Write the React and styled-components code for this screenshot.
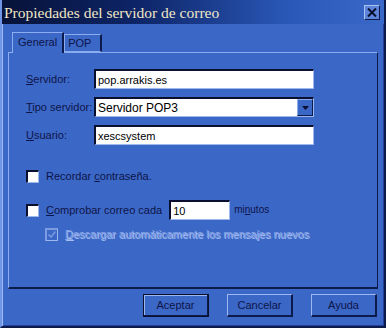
import React from "react";
import styled, { createGlobalStyle } from "styled-components";

const Global = createGlobalStyle`
  html, body { margin: 0; padding: 0; background: #3a66c6; }
  body { font-family: "Liberation Sans", Arial, sans-serif; }
`;

const Window = styled.div`
  box-sizing: border-box;
  width: 386px;
  height: 328px;
  background: #3b67c7;
  display: flex;
  flex-direction: column;
  border-left: 2px solid #6f95e6;
  border-right: 2px solid #0c1a4c;
  border-bottom: 2px solid #0c1a4c;
  box-shadow: inset 1px 0 0 #9cbaf5, inset -1px -1px 0 #22409a;
`;

const TitleBar = styled.div`
  height: 24px;
  display: flex;
  align-items: center;
  justify-content: space-between;
  padding: 0 4px 0 2px;
  background: linear-gradient(90deg, #061238 0%, #0d2466 35%, #2a58b8 75%, #3a68c8 100%);
`;

const Title = styled.span`
  font-family: "Liberation Serif", "Times New Roman", serif;
  font-size: 15.5px;
  color: #f1e6c6;
  margin-top: 1px;
`;

const CloseBtn = styled.div`
  box-sizing: border-box;
  width: 16px;
  height: 15px;
  background: #5d84d8;
  border: 1px solid #0c1a4c;
  border-top-color: #a8c2f4;
  border-left-color: #a8c2f4;
  display: flex;
  align-items: center;
  justify-content: center;
`;

const Body = styled.div`
  flex: 1;
  display: flex;
  flex-direction: column;
  padding: 8px 6px 0 6px;
`;

const Tabs = styled.div`
  display: flex;
  align-items: flex-end;
  padding-left: 4px;
  height: 20px;
  position: relative;
  z-index: 1;
`;

const Tab = styled.div`
  box-sizing: border-box;
  height: ${(p) => (p.$active ? "21px" : "18px")};
  margin-bottom: ${(p) => (p.$active ? "-1px" : "0")};
  padding: ${(p) => (p.$active ? "3px 5px 0 5px" : "2px 9px 0 3px")};
  font-size: 11px;
  color: #0e1548;
  background: #3b67c7;
  border-top: 1px solid #8cacf0;
  border-left: 1px solid #8cacf0;
  border-right: 2px solid #0c1a4c;
  ${(p) => (p.$active ? "" : "border-bottom: 1px solid #8cacf0;")}
`;

const Panel = styled.div`
  box-sizing: border-box;
  width: 370px;
  height: 237px;
  border-top: 1px solid #8cacf0;
  border-left: 1px solid #8cacf0;
  border-right: 1px solid #0c1a4c;
  border-bottom: 2px solid #0c1a4c;
  padding: 16px 0 0 17px;
  display: flex;
  flex-direction: column;
`;

const Form = styled.div`
  display: grid;
  grid-template-columns: 68px 220px;
  row-gap: 8px;
  align-items: center;
`;

const Label = styled.span`
  font-size: 11px;
  color: #0e1548;
`;

const Input = styled.div`
  box-sizing: border-box;
  height: ${(p) => p.$h || 20}px;
  width: ${(p) => (p.$w ? p.$w + "px" : "auto")};
  margin-left: ${(p) => p.$ml || 0}px;
  background: #fff;
  border-top: 2px solid #0a0f30;
  border-left: 2px solid #0a0f30;
  border-right: 1px solid #9db8ee;
  border-bottom: 1px solid #9db8ee;
  font-size: 11px;
  color: #000;
  padding-left: 2px;
  display: flex;
  align-items: center;
`;

const Select = styled(Input)`
  padding-right: 0;
  justify-content: space-between;
  font-size: 12px;
`;

const Arrow = styled.div`
  box-sizing: border-box;
  width: 16px;
  height: 17px;
  background: #3b67c7;
  border: 1px solid #0c1a4c;
  border-top-color: #8cacf0;
  border-left-color: #8cacf0;
  display: flex;
  align-items: center;
  justify-content: center;
`;

const Checks = styled.div`
  display: flex;
  flex-direction: column;
  margin-top: 21px;
`;

const CheckRow = styled.div`
  display: flex;
  align-items: center;
  height: 20px;
  margin-top: ${(p) => p.$mt || 0}px;
  margin-left: ${(p) => p.$indent || 0}px;
`;

const Box = styled.div`
  box-sizing: border-box;
  width: 13px;
  height: 13px;
  background: ${(p) => (p.$disabled ? "#3b67c7" : "#fff")};
  border-top: 2px solid ${(p) => (p.$disabled ? "#7d9be0" : "#0a0f30")};
  border-left: 2px solid ${(p) => (p.$disabled ? "#7d9be0" : "#0a0f30")};
  border-right: 1px solid #9db8ee;
  border-bottom: 1px solid #9db8ee;
  margin-right: 7px;
  display: flex;
  align-items: center;
  justify-content: center;
`;

const CheckText = styled.span`
  font-size: 11px;
  color: ${(p) => (p.$disabled ? "#86a4e6" : "#0e1548")};
  ${(p) => (p.$disabled ? "text-shadow: 1px 1px 0 #a4bdf0;" : "")}
`;

const Minutes = styled.span`
  font-size: 10px;
  color: #0e1548;
  margin-left: 4px;
  margin-top: -2px;
`;

const Buttons = styled.div`
  display: flex;
  justify-content: flex-end;
  gap: 18px;
  padding: 5px 1px 0 0;
`;

const Button = styled.div`
  box-sizing: border-box;
  width: 66px;
  height: 23px;
  font-size: 11px;
  color: #0e1548;
  display: flex;
  align-items: center;
  justify-content: center;
  border-top: 1px solid #9db8ee;
  border-left: 1px solid #9db8ee;
  border-right: 2px solid #0c1a4c;
  border-bottom: 2px solid #0c1a4c;
  ${(p) => (p.$default ? "outline: 1px solid #0a0f30; outline-offset: -1px; box-shadow: inset 1px 1px 0 #9db8ee;" : "")}
`;

export default function App() {
  return (
    <>
      <Global />
      <Window>
        <TitleBar>
          <Title>Propiedades del servidor de correo</Title>
          <CloseBtn>
            <svg width="10" height="9" viewBox="0 0 10 9">
              <path d="M1 0.5 L9 8.5 M9 0.5 L1 8.5" stroke="#0a0f30" strokeWidth="2" />
            </svg>
          </CloseBtn>
        </TitleBar>
        <Body>
          <Tabs>
            <Tab $active>General</Tab>
            <Tab>POP</Tab>
          </Tabs>
          <Panel>
            <Form>
              <Label><u>S</u>ervidor:</Label>
              <Input>pop.arrakis.es</Input>
              <Label><u>T</u>ipo servidor:</Label>
              <Select>
                <span>Servidor POP3</span>
                <Arrow>
                  <svg width="7" height="4" viewBox="0 0 7 4">
                    <path d="M0 0 H7 L3.5 4 Z" fill="#0a0f30" />
                  </svg>
                </Arrow>
              </Select>
              <Label><u>U</u>suario:</Label>
              <Input>xescsystem</Input>
            </Form>
            <Checks>
              <CheckRow>
                <Box />
                <CheckText>Recordar <u>c</u>ontraseña.</CheckText>
              </CheckRow>
              <CheckRow $mt={14}>
                <Box />
                <CheckText><u>C</u>omprobar correo cada</CheckText>
                <Input $w={61} $ml={7}>10</Input>
                <Minutes>mi<u>n</u>utos</Minutes>
              </CheckRow>
              <CheckRow $mt={4} $indent={19}>
                <Box $disabled>
                  <svg width="8" height="7" viewBox="0 0 8 7">
                    <path d="M0.5 3.5 L3 6 L7.5 0.5" stroke="#7d9be0" strokeWidth="1.5" fill="none" />
                  </svg>
                </Box>
                <CheckText $disabled><u>D</u>escargar automáticamente los mensajes nuevos</CheckText>
              </CheckRow>
            </Checks>
          </Panel>
          <Buttons>
            <Button $default>Aceptar</Button>
            <Button>Cancelar</Button>
            <Button>Ayuda</Button>
          </Buttons>
        </Body>
      </Window>
    </>
  );
}
